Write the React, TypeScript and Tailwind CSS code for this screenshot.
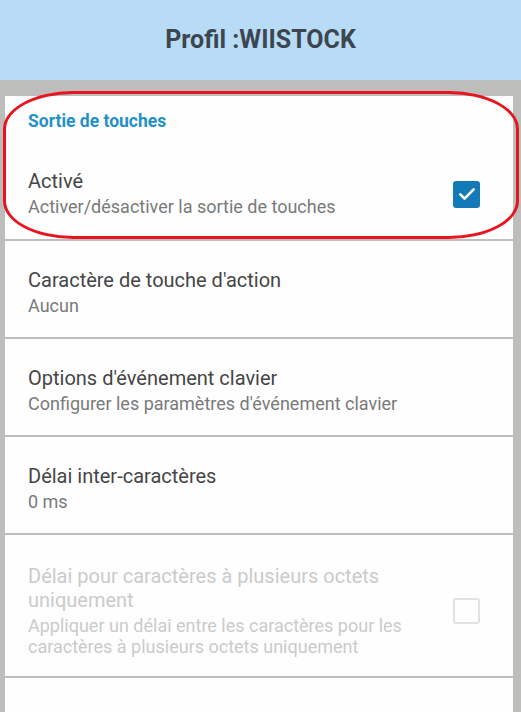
import React from "react";

const font = { fontFamily: "Roboto, 'Noto Sans', sans-serif" };

function Row({ title, sub }: { title: string; sub: string }) {
  return (
    <div className="bg-[#fdfefd] h-[96px] flex flex-col justify-center pl-[23px] pt-[8px]">
      <div className="text-[20px] leading-[24px] text-[#464646]">{title}</div>
      <div className="text-[18px] leading-[24px] mt-[2px] text-[#7a7a7a]">{sub}</div>
    </div>
  );
}

export default function App() {
  return (
    <div className="relative w-[521px] h-[712px] overflow-hidden bg-[#bdbebc]" style={font}>
      <div className="h-[80px] bg-[#b9dcf6] flex items-center justify-center">
        <div className="text-[25px] font-bold text-[#3c4650]">Profil :WIISTOCK</div>
      </div>
      <div className="pl-[5px] pr-[8px] pt-[16px] flex flex-col gap-[2px]">
        <div className="bg-[#fdfefd] h-[143px] flex flex-col">
          <div className="pl-[23px] pt-[14px] text-[17.5px] leading-[22px] font-bold text-[#2390c8]">Sortie de touches</div>
          <div className="flex items-center pl-[23px] pr-[33px] pt-[37px]">
            <div className="flex-1">
              <div className="text-[20px] leading-[24px] text-[#464646]">Activé</div>
              <div className="text-[18px] leading-[24px] mt-[2px] text-[#7a7a7a]">Activer/désactiver la sortie de touches</div>
            </div>
            <div className="w-[27px] h-[27px] rounded-[3px] bg-[#137ab8] flex items-center justify-center">
              <svg width="20" height="20" viewBox="0 0 24 24" fill="none" stroke="#fff" strokeWidth="3.2" strokeLinecap="round" strokeLinejoin="round">
                <path d="M4 12.5l5 5L20 6.5" />
              </svg>
            </div>
          </div>
        </div>
        <Row title="Caractère de touche d'action" sub="Aucun" />
        <Row title="Options d'événement clavier" sub="Configurer les paramètres d'événement clavier" />
        <Row title="Délai inter-caractères" sub="0 ms" />
        <div className="bg-[#fdfefd] h-[141px] flex items-center pl-[23px] pr-[33px] pt-[10px]">
          <div className="flex-1">
            <div className="text-[20px] leading-[24px] text-[#cbcbcb] w-[400px]">Délai pour caractères à plusieurs octets uniquement</div>
            <div className="text-[18px] leading-[21px] mt-[3px] text-[#cbcbcb] w-[400px]">Appliquer un délai entre les caractères pour les caractères à plusieurs octets uniquement</div>
          </div>
          <div className="w-[27px] h-[26px] rounded-[3px] border-2 border-[#e2e2e2]" />
        </div>
        <div className="bg-[#fdfefd] h-[60px] pl-[23px] pt-[33px]">
          <div className="text-[20px] leading-[24px] text-[#464646]">Options de format de sortie</div>
        </div>
      </div>
      <div className="absolute left-[3px] top-[91px] w-[516px] h-[148px] border-[3px] border-[#e8141f] rounded-[70px/38px] pointer-events-none" />
    </div>
  );
}
